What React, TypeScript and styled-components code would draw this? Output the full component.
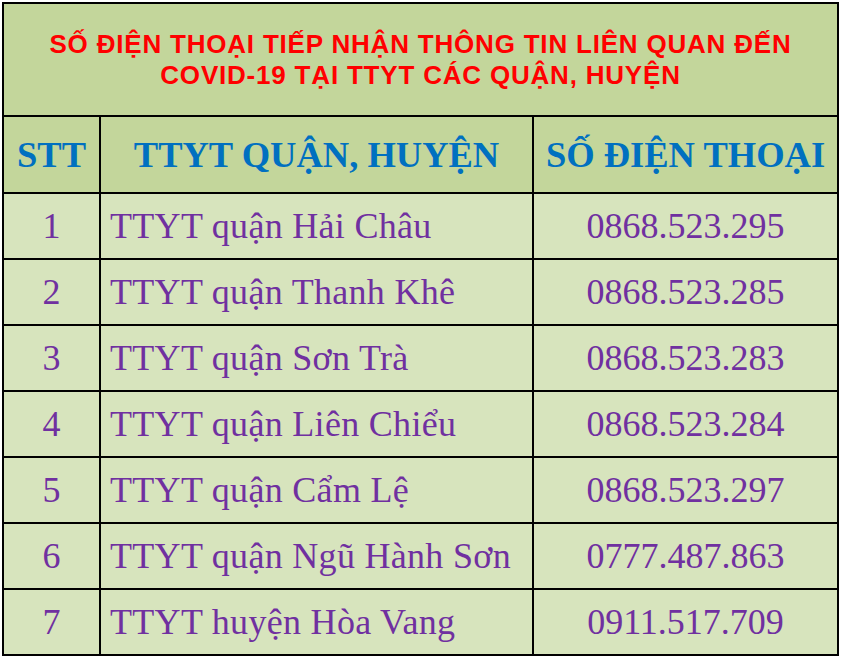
import React from 'react';
import styled, { createGlobalStyle } from 'styled-components';

interface Center {
  no: number;
  name: string;
  phone: string;
}

const centers: Center[] = [
  { no: 1, name: 'TTYT quận Hải Châu', phone: '0868.523.295' },
  { no: 2, name: 'TTYT quận Thanh Khê', phone: '0868.523.285' },
  { no: 3, name: 'TTYT quận Sơn Trà', phone: '0868.523.283' },
  { no: 4, name: 'TTYT quận Liên Chiểu', phone: '0868.523.284' },
  { no: 5, name: 'TTYT quận Cẩm Lệ', phone: '0868.523.297' },
  { no: 6, name: 'TTYT quận Ngũ Hành Sơn', phone: '0777.487.863' },
  { no: 7, name: 'TTYT huyện Hòa Vang', phone: '0911.517.709' },
];

const GlobalStyle = createGlobalStyle`
  html, body {
    margin: 0;
    padding: 0;
    background: #ffffff;
  }
`;

const Page = styled.div`
  padding: 2px 0 0 2px;
`;

const Table = styled.table`
  width: 835px;
  table-layout: fixed;
  border-collapse: collapse;
  border: 2px solid #000;
`;

const TitleCell = styled.td`
  height: 111px;
  padding: 0;
  background: #c3d69b;
  border: 2px solid #000;
  text-align: center;
  vertical-align: middle;
  font-family: 'Liberation Sans', Arial, sans-serif;
  font-weight: bold;
  font-size: 26px;
  letter-spacing: 0.8px;
  line-height: 31px;
  color: #ff0000;
  white-space: nowrap;
`;

const HeadCell = styled.th`
  height: 75px;
  padding: 0;
  background: #c3d69b;
  border: 2px solid #000;
  text-align: center;
  vertical-align: middle;
  font-family: 'Liberation Serif', 'Times New Roman', serif;
  font-weight: bold;
  font-size: 36.5px;
  color: #0070c0;
  white-space: nowrap;
`;

const Cell = styled.td<{ align?: 'left' | 'center' }>`
  height: 64px;
  padding: 0 0 0 ${props => (props.align === 'left' ? '9px' : '0')};
  background: #d7e4bd;
  border: 2px solid #000;
  text-align: ${props => props.align || 'center'};
  vertical-align: middle;
  font-family: 'Liberation Serif', 'Times New Roman', serif;
  font-size: 36px;
  letter-spacing: ${props => (props.align === 'left' ? '0.3px' : '0')};
  color: #7030a0;
  white-space: nowrap;
`;

export default function App() {
  return (
    <Page>
      <GlobalStyle />
      <Table>
        <colgroup>
          <col style={{ width: 97 }} />
          <col style={{ width: 433 }} />
          <col style={{ width: 305 }} />
        </colgroup>
        <thead>
          <tr>
            <TitleCell colSpan={3}>
              SỐ ĐIỆN THOẠI TIẾP NHẬN THÔNG TIN LIÊN QUAN ĐẾN
              <br />
              COVID-19 TẠI TTYT CÁC QUẬN, HUYỆN
            </TitleCell>
          </tr>
          <tr>
            <HeadCell>STT</HeadCell>
            <HeadCell>TTYT QUẬN, HUYỆN</HeadCell>
            <HeadCell>SỐ ĐIỆN THOẠI</HeadCell>
          </tr>
        </thead>
        <tbody>
          {centers.map(c => (
            <tr key={c.no}>
              <Cell>{c.no}</Cell>
              <Cell align="left">{c.name}</Cell>
              <Cell>{c.phone}</Cell>
            </tr>
          ))}
        </tbody>
      </Table>
    </Page>
  );
}
